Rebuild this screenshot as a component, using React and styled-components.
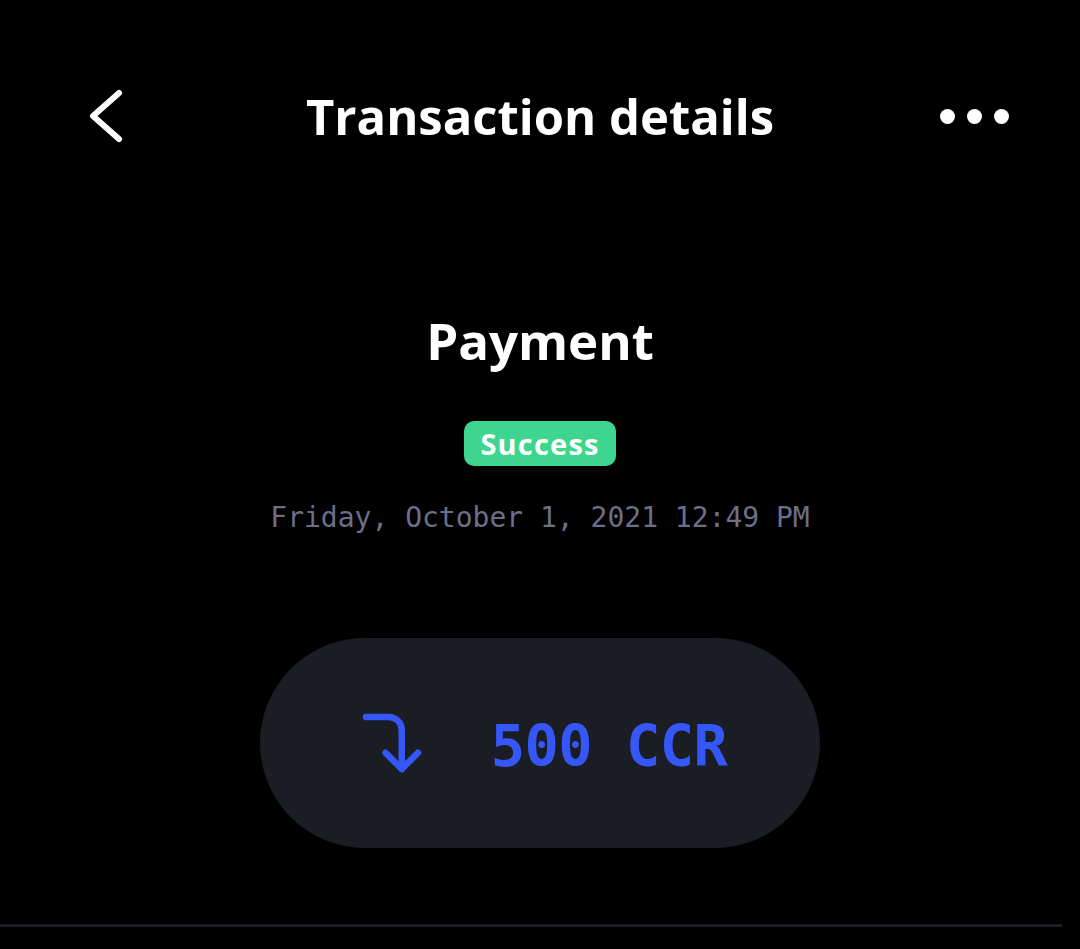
import React from "react";
import styled, { createGlobalStyle } from "styled-components";
import { CornerRightDown } from "lucide-react";

const GlobalStyle = createGlobalStyle`
  html, body {
    margin: 0;
    padding: 0;
    background: #000;
  }
  body {
    font-family: "Open Sans", Lato, sans-serif;
    color: #fff;
  }
`;

const Screen = styled.div`
  width: 1080px;
  height: 949px;
  background: #000;
  display: flex;
  flex-direction: column;
  overflow: hidden;
`;

const Header = styled.header`
  height: 232px;
  display: grid;
  grid-template-columns: 160px 1fr 160px;
  align-items: start;
  padding-top: 84px;
  box-sizing: border-box;
`;

const IconButton = styled.button`
  background: none;
  border: 0;
  padding: 0;
  color: #fff;
  display: flex;
  align-items: center;
  justify-content: ${(p) => p.align || "flex-start"};
  height: 64px;
  cursor: pointer;
`;

const BackIcon = styled.svg`
  margin-left: 80px;
`;

const Title = styled.h1`
  margin: 0;
  text-align: center;
  font-family: "Open Sans", sans-serif;
  font-weight: 700;
  font-size: 49px;
  line-height: 64px;
`;

const Dots = styled.div`
  display: flex;
  gap: 12px;
  margin-right: 71px;
`;

const Dot = styled.span`
  width: 15px;
  height: 15px;
  border-radius: 50%;
  background: #fff;
`;

const Body = styled.main`
  display: flex;
  flex-direction: column;
  align-items: center;
`;

const Kind = styled.h2`
  margin: 76px 0 0;
  font-family: "Open Sans", sans-serif;
  font-weight: 700;
  font-size: 51px;
  line-height: 64px;
`;

const Badge = styled.span`
  margin-top: 49px;
  background: #3ed68f;
  color: #fff;
  font-family: "Open Sans", sans-serif;
  font-weight: 700;
  font-size: 29px;
  letter-spacing: 1.2px;
  line-height: 45px;
  padding: 0 16px;
  border-radius: 10px;
`;

const Stamp = styled.div`
  margin-top: 32px;
  font-family: "DejaVu Sans Mono", monospace;
  font-size: 28px;
  line-height: 40px;
  color: #6b6f88;
`;

const Amount = styled.div`
  margin-top: 100px;
  width: 560px;
  height: 210px;
  border-radius: 105px;
  background: #1b1d24;
  display: flex;
  align-items: center;
  justify-content: center;
  gap: 60px;
  color: #3657f7;
`;

const Value = styled.span`
  font-family: "DejaVu Sans Mono", monospace;
  font-weight: 700;
  font-size: 57px;
  letter-spacing: -0.5px;
  margin-top: 6px;
`;

const Divider = styled.div`
  align-self: flex-start;
  margin-top: 76px;
  width: 1062px;
  height: 3px;
  background: #1c1e25;
`;

export default function App() {
  return (
    <>
      <GlobalStyle />
      <Screen>
        <Header>
          <IconButton aria-label="Back">
            <BackIcon width="48" height="64" viewBox="0 0 48 64" fill="none">
              <path
                d="M39 9 L13 32 L39 55"
                stroke="#fff"
                strokeWidth="6"
                strokeLinecap="round"
                strokeLinejoin="round"
              />
            </BackIcon>
          </IconButton>
          <Title>Transaction details</Title>
          <IconButton align="flex-end" aria-label="More">
            <Dots>
              <Dot />
              <Dot />
              <Dot />
            </Dots>
          </IconButton>
        </Header>
        <Body>
          <Kind>Payment</Kind>
          <Badge>Success</Badge>
          <Stamp>Friday, October 1, 2021 12:49 PM</Stamp>
          <Amount>
            <CornerRightDown size={78} strokeWidth={2} />
            <Value>500 CCR</Value>
          </Amount>
          <Divider />
        </Body>
      </Screen>
    </>
  );
}
